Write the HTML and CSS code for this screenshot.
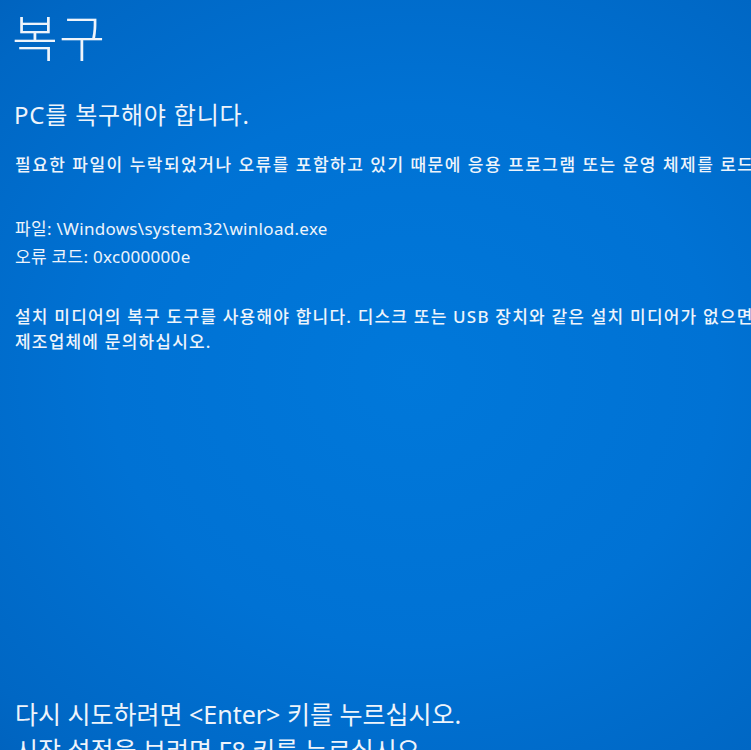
FILE: index.html
```html
<!DOCTYPE html>
<html lang="ko">
<head>
<meta charset="utf-8">
<title>복구</title>
<link rel="stylesheet" href="styles.css">
</head>
<body>
<main class="screen">
  <h1 class="title">복구</h1>
  <h2 class="subtitle">PC를 복구해야 합니다.</h2>
  <p class="text lead">필요한 파일이 누락되었거나 오류를 포함하고 있기 때문에 응용 프로그램 또는 운영 체제를 로드할 수 없습니다.</p>
  <div class="info">
    <p class="text">파일: \Windows\system32\winload.exe</p>
    <p class="text">오류 코드: 0xc000000e</p>
  </div>
  <div class="para">
    <p class="text">설치 미디어의 복구 도구를 사용해야 합니다. 디스크 또는 USB 장치와 같은 설치 미디어가 없으면 PC 관리자 또는 PC/장치</p>
    <p class="text">제조업체에 문의하십시오.</p>
  </div>
  <div class="keys">
    <p class="key">다시 시도하려면 &lt;Enter&gt; 키를 누르십시오.</p>
    <p class="key">시작 설정을 보려면 F8 키를 누르십시오.</p>
  </div>
</main>
</body>
</html>
```

FILE: styles.css
```css
html, body {
  margin: 0;
  padding: 0;
  height: 100%;
  overflow: hidden;
}
body {
  background: #0070d2;
}
.screen {
  box-sizing: border-box;
  width: 751px;
  height: 750px;
  overflow: hidden;
  padding: 0 0 0 12px;
  color: #eef4fb;
  font-family: "Noto Sans", "Noto Sans CJK KR", sans-serif;
  background: radial-gradient(ellipse 90% 80% at 55% 50%, #0078da 0%, #0072d4 45%, #0067c4 80%, #005db6 100%);
  display: flex;
  flex-direction: column;
}
.screen p, .screen h1, .screen h2 {
  margin: 0;
  white-space: nowrap;
}
.title {
  font-weight: 300;
  font-size: 50px;
  line-height: 60px;
  margin-top: 8px !important;
  letter-spacing: 1px;
}
.subtitle {
  font-weight: 400;
  font-size: 24px;
  line-height: 30px;
  margin-top: 32px !important;
  padding-left: 2px;
  letter-spacing: 0.8px;
}
.text {
  font-size: 17px;
  line-height: 28px;
  padding-left: 3px;
  letter-spacing: 0.3px;
}
.lead {
  margin-top: 21px !important;
  font-weight: 500;
  letter-spacing: 1.5px;
}
.info {
  margin-top: 36px;
}
.para {
  margin-top: 33px;
}
.para .text {
  line-height: 25px;
  font-weight: 500;
  letter-spacing: 1.2px;
}
.keys {
  margin-top: 342px;
}
.key {
  font-size: 25px;
  line-height: 36px;
  padding-left: 3px;
}
```
